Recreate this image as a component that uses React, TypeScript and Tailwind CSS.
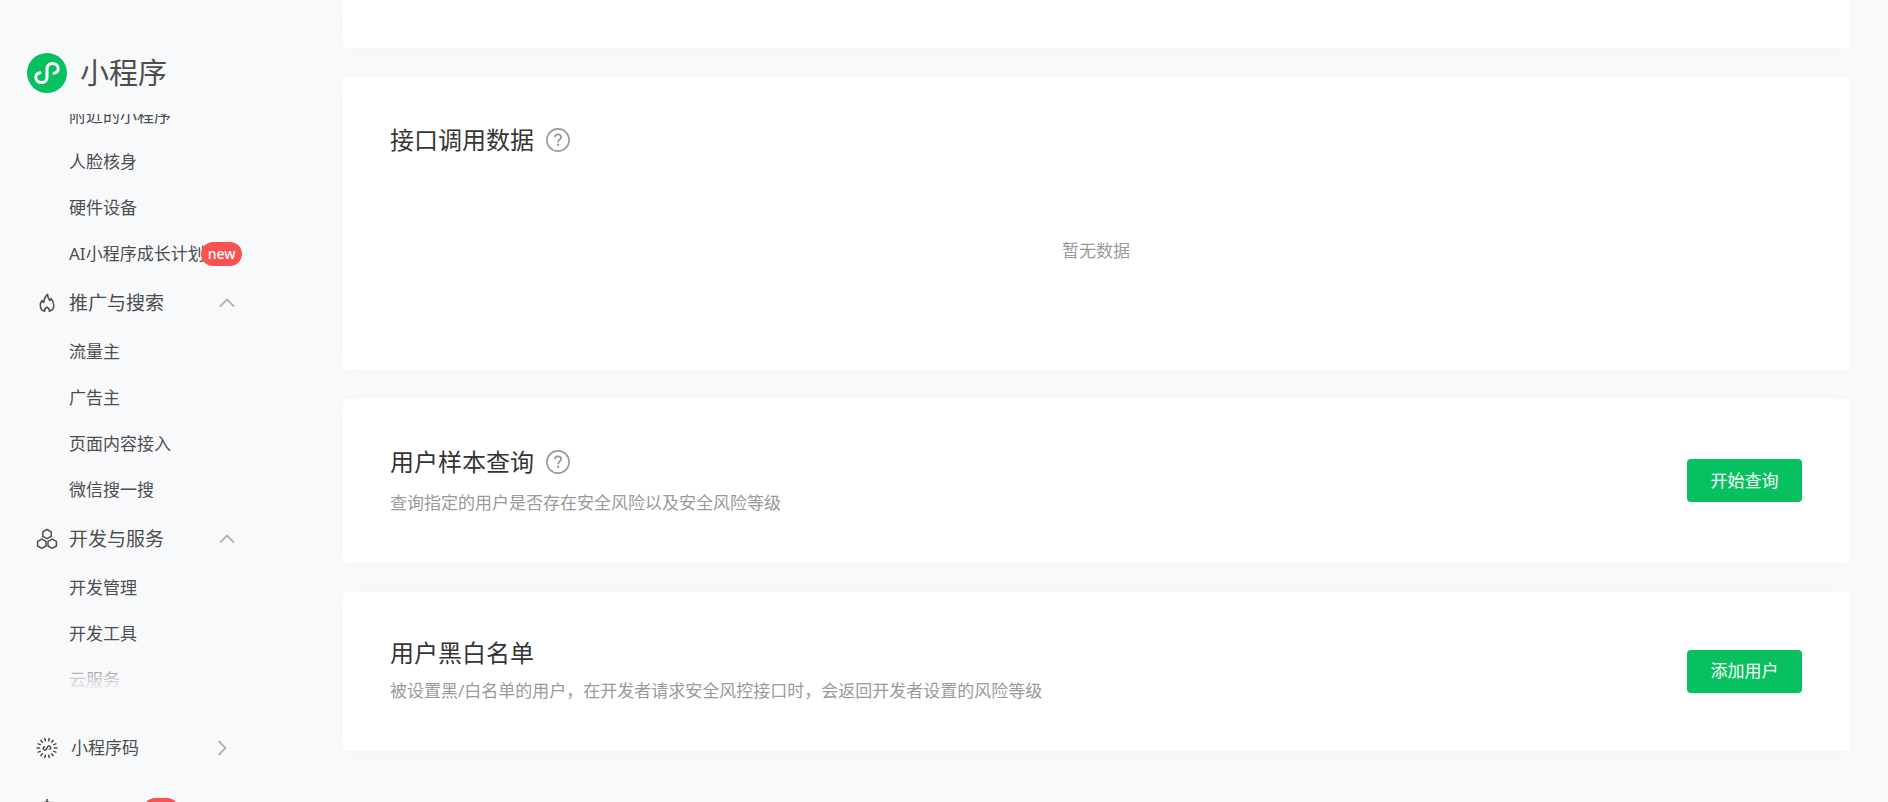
import type { ReactNode } from 'react';

type MenuItem = {
  label: string;
  isNew?: boolean;
};

type MenuGroupProps = {
  title: string;
  icon: ReactNode;
  items: MenuItem[];
};

type CardProps = {
  title: string;
  help?: boolean;
  description?: string;
  action?: string;
  children?: ReactNode;
};

const ABILITY_ITEMS: MenuItem[] = [
  { label: '附近的小程序' },
  { label: '人脸核身' },
  { label: '硬件设备' },
  { label: 'AI小程序成长计划', isNew: true },
];

const PROMOTION_ITEMS: MenuItem[] = [
  { label: '流量主' },
  { label: '广告主' },
  { label: '页面内容接入' },
  { label: '微信搜一搜' },
];

const DEVELOP_ITEMS: MenuItem[] = [{ label: '开发管理' }, { label: '开发工具' }, { label: '云服务' }];

const RAY_COUNT = 14;

const MINI_PROGRAM_PATH =
  'M27 20.2C29.6 19.6 31.2 18 31.2 15.7C31.2 12.6 28.6 10.4 25.5 10.4C22.4 10.4 20 12.6 20 15.7V24.3C20 27.4 17.6 29.6 14.5 29.6C11.4 29.6 8.8 27.4 8.8 24.3C8.8 22 10.4 20.4 13 19.8';

function LogoIcon() {
  return (
    <svg width="40" height="40" viewBox="0 0 40 40" fill="none" aria-hidden="true">
      <circle cx="20" cy="20" r="20" fill="#07c160" />
      <path d={MINI_PROGRAM_PATH} stroke="#fff" strokeWidth="3" strokeLinecap="round" />
    </svg>
  );
}

function FlameIcon() {
  return (
    <svg width="22" height="22" viewBox="0 0 22 22" fill="none" stroke="#4c4d4f" strokeWidth="1.5" strokeLinejoin="round" aria-hidden="true">
      <path d="M8.6 19.2C5.9 18.4 4.3 16.2 4.3 13.4C4.3 11.4 5 9.8 6.1 8.5C6.3 9.6 6.8 10.3 7.8 10.4C8.2 6.9 9.2 4 11.6 2.3C11.5 5 12.4 7 13.8 8.6C14.6 8.3 15 7.6 15 6.6C16.8 8.5 17.8 10.8 17.8 13.4C17.8 16.2 16.2 18.4 13.4 19.2C13.6 17.6 13 16.4 11 15.2C9 16.4 8.4 17.6 8.6 19.2Z" />
    </svg>
  );
}

function HexagonsIcon() {
  return (
    <svg width="22" height="22" viewBox="0 0 22 22" fill="none" stroke="#4c4d4f" strokeWidth="1.5" strokeLinejoin="round" aria-hidden="true">
      <path d="M11 1.5L15.2 3.8V8.4L11 10.7L6.8 8.4V3.8Z" />
      <path d="M5.8 11.1L10 13.4V18L5.8 20.3L1.6 18V13.4Z" />
      <path d="M16.2 11.1L20.4 13.4V18L16.2 20.3L12 18V13.4Z" />
    </svg>
  );
}

function CodeIcon() {
  return (
    <svg width="22" height="22" viewBox="0 0 22 22" fill="none" stroke="#333" aria-hidden="true">
      {Array.from({ length: RAY_COUNT }, (_, i) => (
        <path key={i} d="M11 0.6V4.1" strokeWidth="1.3" transform={`rotate(${((i + 0.5) * 360) / RAY_COUNT} 11 11)`} />
      ))}
      <path d={MINI_PROGRAM_PATH} strokeWidth="4" transform="translate(5 5) scale(0.3) rotate(28 20 20)" />
    </svg>
  );
}

function BellIcon() {
  return (
    <svg width="22" height="22" viewBox="0 0 22 22" fill="none" stroke="#4c4d4f" strokeWidth="1.6" strokeLinejoin="round" aria-hidden="true">
      <path d="M11 0V3M4 17V10C4 6 7 3 11 3C15 3 18 6 18 10V17H4ZM9 20H13" />
    </svg>
  );
}

function HelpIcon() {
  return (
    <svg width="24" height="24" viewBox="0 0 24 24" fill="none" stroke="#9a9a9a" strokeWidth="1.6" aria-hidden="true">
      <circle cx="12" cy="12" r="11.1" />
      <path d="M8.9 9.3C8.9 7.5 10.2 6.4 12 6.4C13.8 6.4 15.1 7.5 15.1 9.1C15.1 10.3 14.4 10.9 13.5 11.6C12.5 12.4 12.1 12.8 12.1 14.2" strokeWidth="1.8" />
      <circle cx="12.1" cy="16.8" r="1.2" fill="#9a9a9a" stroke="none" />
    </svg>
  );
}

function ChevronUp() {
  return (
    <svg width="16" height="10" viewBox="0 0 16 10" fill="none" stroke="#b2b2b2" strokeWidth="1.8" aria-hidden="true">
      <path d="M1 8.5L8 1.5L15 8.5" />
    </svg>
  );
}

function ChevronRight() {
  return (
    <svg width="10" height="16" viewBox="0 0 10 16" fill="none" stroke="#b2b2b2" strokeWidth="1.8" aria-hidden="true">
      <path d="M1.5 1L8.5 8L1.5 15" />
    </svg>
  );
}

function MenuList({ items }: { items: MenuItem[] }) {
  return (
    <ul className="shrink-0">
      {items.map((item) => (
        <li key={item.label}>
          <a href="#" className="flex h-[46px] items-center pl-[69px] text-[17px] leading-6 whitespace-nowrap">
            {item.label}
            {item.isNew && (
              <span className="-ml-1 h-6 rounded-full bg-[#fa5151] px-[7px] text-sm leading-[23px] font-medium text-white">new</span>
            )}
          </a>
        </li>
      ))}
    </ul>
  );
}

function MenuGroup({ title, icon, items }: MenuGroupProps) {
  return (
    <div className="shrink-0">
      <button type="button" className="flex h-[52px] w-full items-center pr-10 pl-9 text-[19px] leading-7">
        {icon}
        <span className="ml-[11px] flex-1 text-left">{title}</span>
        <ChevronUp />
      </button>
      <MenuList items={items} />
    </div>
  );
}

function Sidebar() {
  return (
    <aside className="sticky top-0 flex h-screen w-[275px] shrink-0 flex-col overflow-hidden text-[#4c4d4f]">
      <a href="#" className="flex shrink-0 items-center gap-[13px] pt-[53px] pb-[21px] pl-[27px] text-[29px] leading-10">
        <LogoIcon />
        小程序
      </a>
      <nav className="relative flex min-h-0 flex-1 flex-col justify-end overflow-hidden">
        <MenuList items={ABILITY_ITEMS} />
        <MenuGroup title="推广与搜索" icon={<FlameIcon />} items={PROMOTION_ITEMS} />
        <MenuGroup title="开发与服务" icon={<HexagonsIcon />} items={DEVELOP_ITEMS} />
        <div className="pointer-events-none absolute inset-x-0 bottom-0 h-14 bg-linear-to-t from-[#f8f9fb] from-20% to-transparent" />
      </nav>
      <div className="h-[99px] shrink-0 overflow-hidden pt-[19px]">
        <button type="button" className="flex h-[52px] w-full items-center pr-12 pl-9 text-[17px] leading-6">
          <CodeIcon />
          <span className="ml-[13px] flex-1 text-left">小程序码</span>
          <ChevronRight />
        </button>
        <button type="button" aria-label="通知" className="mt-[10px] flex h-[52px] w-full items-center pl-9">
          <BellIcon />
          <span className="ml-[85px] h-6 w-9 rounded-full bg-[#fa5151]" />
        </button>
      </div>
    </aside>
  );
}

function Card({ title, help, description, action, children }: CardProps) {
  return (
    <section className="rounded bg-white pt-[47px] pr-12 pb-12 pl-[47px] shadow-[0_1px_16px_rgba(0,0,0,0.02)]">
      <div className="flex items-center justify-between">
        <div>
          <div className="flex items-center gap-3">
            <h2 className={help ? 'text-2xl leading-8 text-[#353535]' : 'text-2xl leading-[27px] text-[#353535]'}>{title}</h2>
            {help && (
              <button type="button" aria-label="帮助">
                <HelpIcon />
              </button>
            )}
          </div>
          {description && <p className="mt-3 text-[17px] leading-[25px] text-[#9a9a9a]">{description}</p>}
        </div>
        {action && (
          <button type="button" className="h-[43px] w-[115px] shrink-0 rounded bg-[#07c160] text-[17px] leading-6 text-white">
            {action}
          </button>
        )}
      </div>
      {children}
    </section>
  );
}

export default function App() {
  return (
    <div className="flex min-h-screen bg-[#f8f9fb] font-['Noto_Sans','Noto_Sans_CJK_SC',sans-serif]">
      <Sidebar />
      <main className="flex min-w-0 flex-1 flex-col gap-[29px] pr-[38px] pb-12 pl-[68px]">
        <div className="h-12 rounded-b bg-white shadow-[0_1px_16px_rgba(0,0,0,0.02)]" />
        <Card title="接口调用数据" help>
          <p className="mt-6 py-[59px] text-center text-[17px] leading-6 text-[#9a9a9a]">暂无数据</p>
        </Card>
        <Card title="用户样本查询" help description="查询指定的用户是否存在安全风险以及安全风险等级" action="开始查询" />
        <Card
          title="用户黑白名单"
          description="被设置黑/白名单的用户，在开发者请求安全风控接口时，会返回开发者设置的风险等级"
          action="添加用户"
        />
      </main>
    </div>
  );
}
